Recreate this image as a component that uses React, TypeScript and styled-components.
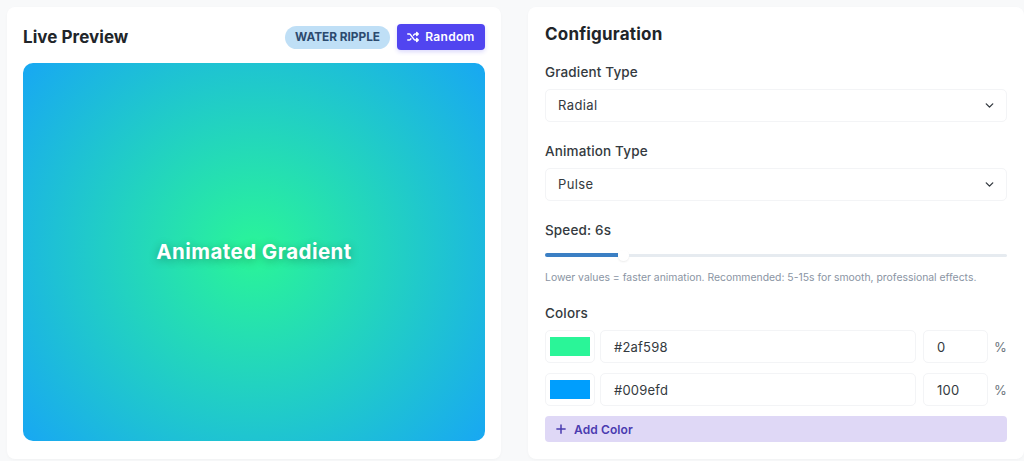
import React from "react";
import styled, { createGlobalStyle } from "styled-components";
import { ChevronDown } from "lucide-react";
import { FaPlus, FaShuffle } from "react-icons/fa6";

const Global = createGlobalStyle`
  html, body { margin: 0; padding: 0; background: #f8f9fa; overflow: hidden; }
  * { box-sizing: border-box; }
  body { font-family: Inter, "Noto Sans", sans-serif; color: #212529; }
`;

const Page = styled.div`
  display: grid;
  grid-template-columns: 494px 496px;
  column-gap: 27px;
  padding: 7px 0 0 7px;
  width: 1024px;
  height: 461px;
`;

const Card = styled.section`
  background: #fff;
  border-radius: 8px;
  height: 452px;
  padding: 16px;
  box-shadow: 0 1px 3px rgba(0, 0, 0, 0.03);
  display: flex;
  flex-direction: column;
`;

const ConfigCard = styled(Card)`
  padding-right: 17px;
`;

const PreviewHead = styled.header`
  display: flex;
  align-items: center;
  justify-content: space-between;
  height: 26px;
  margin: 1px 0 13px;
`;

const CardTitle = styled.h2`
  margin: 0;
  font-size: 17px;
  line-height: 26px;
  font-weight: 700;
  letter-spacing: 0.05px;
  color: #212529;
`;

const HeadActions = styled.div`
  display: flex;
  align-items: center;
  gap: 7px;
`;

const Badge = styled.span`
  height: 23px;
  padding: 0 10px;
  border-radius: 12px;
  background: #bfdff6;
  color: #2c4a6e;
  font-size: 11.8px;
  font-weight: 700;
  display: flex;
  align-items: center;
`;

const RandomButton = styled.button`
  height: 26px;
  width: 88px;
  border: 0;
  border-radius: 4px;
  padding: 0 0 1px;
  background: #5145f0;
  color: #fff;
  font: 600 12px Inter, sans-serif;
  letter-spacing: 0.3px;
  display: flex;
  align-items: center;
  justify-content: center;
  gap: 6px;
  box-shadow: 0 2px 4px rgba(81, 69, 240, 0.2);
`;

const Preview = styled.div`
  height: 378px;
  padding-bottom: 1px;
  border-radius: 10px;
  background: radial-gradient(circle 300px at 50% 50%, #2af598 0%, #18a7f3 100%);
  display: flex;
  align-items: center;
  justify-content: center;
  color: #fff;
  font-size: 20.5px;
  font-weight: 700;
  letter-spacing: 0.45px;
  text-shadow: 0 2px 10px rgba(0, 0, 0, 0.3);
`;

const ConfigTitle = styled.h2`
  margin: 1px 0 19px 1px;
  font-size: 17px;
  line-height: 21px;
  font-weight: 700;
  letter-spacing: 0.2px;
  color: #212529;
`;

const Field = styled.div<{ $gap?: number }>`
  margin: 0 0 ${(p) => p.$gap ?? 21}px 1px;
`;

const Label = styled.div`
  font-size: 13.5px;
  line-height: 17px;
  font-weight: 500;
  letter-spacing: 0.15px;
  color: #343a40;
  margin-bottom: 8px;
`;

const Select = styled.div`
  height: 33px;
  border: 1px solid #f3f4f6;
  border-radius: 5px;
  padding: 0 10px 1px 12px;
  display: flex;
  align-items: center;
  justify-content: space-between;
  font-size: 13px;
  letter-spacing: 0.4px;
  color: #343a40;
`;

const Slider = styled.div`
  display: flex;
  align-items: center;
  height: 8px;
  margin: 12px 0 12px;
`;

const SliderFill = styled.div`
  width: 73px;
  height: 4px;
  border-radius: 2px 0 0 2px;
  background: #3b7fc4;
`;

const SliderThumb = styled.div`
  width: 11px;
  height: 11px;
  border-radius: 50%;
  background: #fff;
  box-shadow: 0 1px 2px rgba(0, 0, 0, 0.08);
`;

const SliderRest = styled.div`
  flex: 1;
  height: 3px;
  border-radius: 0 2px 2px 0;
  background: #e6ebf0;
`;

const Hint = styled.div`
  font-size: 10.4px;
  line-height: 13px;
  color: #8a94a3;
`;

const ColorRow = styled.div`
  display: flex;
  align-items: center;
  margin-bottom: 10px;
`;

const Swatch = styled.div`
  width: 50px;
  height: 33px;
  border: 1px solid #f3f4f6;
  border-radius: 5px;
  padding: 6px 4px;
  margin-right: 5px;
  flex: none;
`;

const SwatchColor = styled.div<{ $color: string }>`
  width: 100%;
  height: 100%;
  background: ${(p) => p.$color};
`;

const Input = styled.div<{ $width: number }>`
  width: ${(p) => p.$width}px;
  height: 33px;
  border: 1px solid #f3f4f6;
  border-radius: 5px;
  padding: 0 13px;
  display: flex;
  align-items: center;
  font-size: 13px;
  letter-spacing: 0.2px;
  color: #343a40;
  flex: none;
`;

const Percent = styled.span`
  margin-left: 6px;
  font-size: 13px;
  color: #6c757d;
`;

const AddButton = styled.button`
  width: 100%;
  height: 26px;
  border: 0;
  border-radius: 4px;
  background: #dfd8f6;
  color: #4a3bb0;
  font: 600 12px Inter, sans-serif;
  letter-spacing: 0.1px;
  display: flex;
  align-items: center;
  gap: 7px;
  padding: 0 10px;
`;

const Gap = styled.div`
  width: 7px;
  flex: none;
`;

const colors = [
  { hex: "#2af598", pos: "0" },
  { hex: "#009efd", pos: "100" },
];

export default function App() {
  return (
    <Page>
      <Global />
      <Card>
        <PreviewHead>
          <CardTitle>Live Preview</CardTitle>
          <HeadActions>
            <Badge>WATER RIPPLE</Badge>
            <RandomButton>
              <FaShuffle size={12} />
              Random
            </RandomButton>
          </HeadActions>
        </PreviewHead>
        <Preview>Animated Gradient</Preview>
      </Card>
      <ConfigCard>
        <ConfigTitle>Configuration</ConfigTitle>
        <Field>
          <Label>Gradient Type</Label>
          <Select>
            Radial
            <ChevronDown size={13} strokeWidth={2.5} />
          </Select>
        </Field>
        <Field>
          <Label>Animation Type</Label>
          <Select>
            Pulse
            <ChevronDown size={13} strokeWidth={2.5} />
          </Select>
        </Field>
        <Field>
          <Label>Speed: 6s</Label>
          <Slider>
            <SliderFill />
            <SliderThumb />
            <SliderRest />
          </Slider>
          <Hint>Lower values = faster animation. Recommended: 5-15s for smooth, professional effects.</Hint>
        </Field>
        <Field $gap={0}>
          <Label>Colors</Label>
          {colors.map((c) => (
            <ColorRow key={c.hex}>
              <Swatch>
                <SwatchColor $color={c.hex} />
              </Swatch>
              <Input $width={316}>{c.hex}</Input>
              <Gap />
              <Input $width={65}>{c.pos}</Input>
              <Percent>%</Percent>
            </ColorRow>
          ))}
          <AddButton>
            <FaPlus size={12} />
            Add Color
          </AddButton>
        </Field>
      </ConfigCard>
    </Page>
  );
}
